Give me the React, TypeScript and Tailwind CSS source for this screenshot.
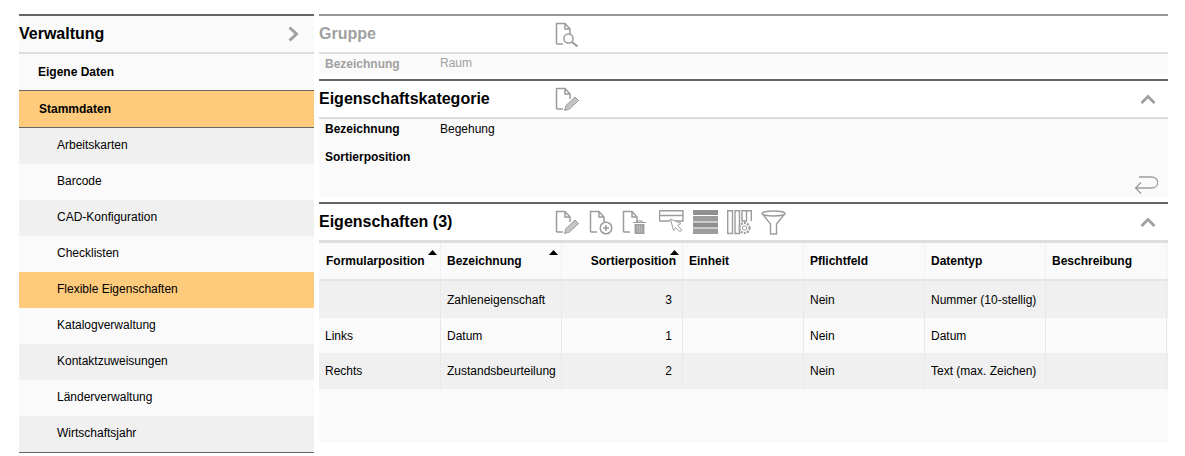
const menuItems = [
  { label: "Arbeitskarten", bg: "bg-[#f0f0f0]" },
  { label: "Barcode", bg: "bg-[#fafafa]" },
  { label: "CAD-Konfiguration", bg: "bg-[#f0f0f0]" },
  { label: "Checklisten", bg: "bg-[#fafafa]" },
  { label: "Flexible Eigenschaften", bg: "bg-[#fdcb7b]" },
  { label: "Katalogverwaltung", bg: "bg-[#fafafa]" },
  { label: "Kontaktzuweisungen", bg: "bg-[#f0f0f0]" },
  { label: "Länderverwaltung", bg: "bg-[#fafafa]" },
  { label: "Wirtschaftsjahr", bg: "bg-[#f0f0f0]" },
];

const columns = ["Formularposition", "Bezeichnung", "Sortierposition", "Einheit", "Pflichtfeld", "Datentyp", "Beschreibung"];

const rows = [
  { form: "", name: "Zahleneigenschaft", pos: "3", type: "Nummer (10-stellig)", bg: "bg-[#f0f0f0]", h: "h-[37px]" },
  { form: "Links", name: "Datum", pos: "1", type: "Datum", bg: "bg-[#fafafa]", h: "h-[35px]" },
  { form: "Rechts", name: "Zustandsbeurteilung", pos: "2", type: "Text (max. Zeichen)", bg: "bg-[#f0f0f0]", h: "h-[36px]" },
];

function Doc() {
  return <path d="M1.5 22V1.5H10L15 7V12M10 1.5V7H15M1.5 22H8" />;
}

function SearchDocIcon() {
  return (
    <svg width="24" height="25" viewBox="0 0 24 25" fill="none" stroke="#9c9c9c" strokeWidth="1.5" className="block">
      <Doc />
      <circle cx="13.5" cy="16.5" r="4.6" fill="#fff" />
      <path d="M17 20L22.5 24.5" strokeWidth="2.2" />
    </svg>
  );
}

function EditDocIcon() {
  return (
    <svg width="24" height="25" viewBox="0 0 24 25" fill="none" stroke="#9c9c9c" strokeWidth="1.5" className="block">
      <Doc />
      <path d="M9.5 23.5L11 18.5L20 10L23.5 13.5L14.5 22Z" fill="#c4c4c4" stroke="#9c9c9c" strokeWidth="1" />
    </svg>
  );
}

function AddDocIcon() {
  return (
    <svg width="24" height="25" viewBox="0 0 24 25" fill="none" stroke="#9c9c9c" strokeWidth="1.5" className="block">
      <Doc />
      <circle cx="17" cy="18" r="5.8" fill="#fff" />
      <path d="M14 18H20M17 15V21" />
    </svg>
  );
}

function TrashDocIcon() {
  return (
    <svg width="24" height="25" viewBox="0 0 24 25" fill="none" stroke="#9c9c9c" strokeWidth="1.5" className="block">
      <Doc />
      <path d="M11 12.5H24M15 12.5V11H20V12.5" strokeWidth="1.2" />
      <path d="M12.5 14H22.5V24H12.5Z" fill="#a0a0a0" stroke="none" />
      <path d="M15.5 15.5V22.5M17.5 15.5V22.5M19.5 15.5V22.5" stroke="#c8c8c8" strokeWidth="0.7" />
    </svg>
  );
}

function SelectRowIcon() {
  return (
    <svg width="25" height="22" viewBox="0 0 25 22" fill="none" stroke="#9c9c9c" strokeWidth="1.4" className="block">
      <path d="M0.5 0.7H24V5.5H0.5ZM0.5 5.5V11H11M16 11H24V5.5" />
      <path d="M11.5 9L22 13.5L18.5 15.5L23 20L21 21.5L16.5 17.5L14.5 20.5Z" fill="#fff" strokeWidth="1" />
    </svg>
  );
}

function RowsIcon() {
  return (
    <svg width="25" height="24" viewBox="0 0 25 24" className="block">
      <rect x="0" y="0" width="25" height="5" fill="#8f8f8f" />
      <rect x="0" y="6" width="25" height="5.5" fill="#9c9c9c" />
      <rect x="0" y="12.5" width="25" height="5" fill="#8f8f8f" />
      <rect x="0" y="18.5" width="25" height="5.5" fill="#9c9c9c" />
    </svg>
  );
}

function ColumnsIcon() {
  return (
    <svg width="25" height="25" viewBox="0 0 25 25" fill="none" stroke="#9c9c9c" strokeWidth="1.4" className="block">
      <path d="M0.7 0.7H5.5V23.5H0.7ZM8 0.7H12.5V23.5H8ZM15 0.7H19.5V11H15ZM19.5 0.7H24.3V11" />
      <circle cx="17.5" cy="18" r="5" fill="#fff" strokeWidth="2.2" strokeDasharray="2 1.2" />
      <circle cx="17.5" cy="18" r="2.2" strokeWidth="1" />
    </svg>
  );
}

function FilterIcon() {
  return (
    <svg width="25" height="25" viewBox="0 0 25 25" fill="none" stroke="#9c9c9c" strokeWidth="1.4" className="block">
      <ellipse cx="12.5" cy="3.5" rx="11.5" ry="2.5" />
      <path d="M1 3.5L9.5 14V24H15.5V14L24 3.5" />
    </svg>
  );
}

function ChevronUp() {
  return (
    <svg width="16" height="10" viewBox="0 0 16 10" fill="none" stroke="#a0a0a0" strokeWidth="2.8" className="block">
      <path d="M1.5 9L8 2.5L14.5 9" />
    </svg>
  );
}

function SortMark() {
  return (
    <svg width="9" height="5" viewBox="0 0 9 5" className="block">
      <path d="M4.5 0L9 5H0Z" fill="#000" />
    </svg>
  );
}

function PanelHeader({ title, muted, children, collapse }: { title: string; muted?: boolean; children?: React.ReactNode; collapse?: boolean }) {
  return (
    <div className="flex h-9 items-center bg-white">
      <div className={`w-[236px] text-base font-bold ${muted ? "text-[#a0a0a0]" : "text-black"}`}>{title}</div>
      <div className="flex flex-1 items-center">{children}</div>
      {collapse && (
        <div className="mr-[12px]">
          <ChevronUp />
        </div>
      )}
    </div>
  );
}

export default function App() {
  return (
    <div className="flex h-[456px] w-[1185px] bg-white pt-[14px] pl-[19px] font-['Liberation_Sans',Arial,sans-serif] text-xs text-black">
      {/* Sidebar */}
      <div className="w-[295px]">
        <div className="flex h-[40px] items-center justify-between border-t-2 border-b-2 border-t-[#666] border-b-[#ddd] bg-[#fafafa] pr-[15px]">
          <span className="text-base font-bold">Verwaltung</span>
          <svg width="11" height="16" viewBox="0 0 11 16" fill="none" stroke="#a0a0a0" strokeWidth="3" className="block">
            <path d="M1.5 1.5L8.5 8L1.5 14.5" />
          </svg>
        </div>
        <div className="flex h-9 items-center bg-[#fafafa] pl-[19px] font-bold">Eigene Daten</div>
        <div className="flex h-[38px] items-center border-y border-[#666] bg-[#fdcb7b] pl-5 font-bold">Stammdaten</div>
        {menuItems.map((item) => (
          <div key={item.label} className={`flex h-9 items-center pb-[2px] pl-[38px] ${item.bg}`}>
            {item.label}
          </div>
        ))}
        <div className="h-px bg-[#666]" />
      </div>

      {/* Content */}
      <div className="ml-[5px] w-[849px]">
        <div className="border-t-2 border-[#999]">
          <PanelHeader title="Gruppe" muted>
            <SearchDocIcon />
          </PanelHeader>
          <div className="flex h-[22px] border-t-2 border-[#ddd] bg-[#fafafa] pt-px text-[#a0a0a0]">
            <span className="w-[121px] pt-px pl-1.5 font-bold">Bezeichnung</span>
            <span>Raum</span>
          </div>
        </div>

        <div className="mt-[5px] border-t-2 border-[#666]">
          <PanelHeader title="Eigenschaftskategorie" collapse>
            <EditDocIcon />
          </PanelHeader>
          <div className="h-[80px] border-t-2 border-[#ddd] bg-[#fafafa]">
            <div className="flex h-5 items-center">
              <span className="w-[121px] pl-1.5 font-bold">Bezeichnung</span>
              <span>Begehung</span>
            </div>
            <div className="mt-2 flex h-5 items-center">
              <span className="w-[121px] pl-1.5 font-bold">Sortierposition</span>
            </div>
            <div className="mt-[9px] flex justify-end pr-[10px]">
              <svg width="24" height="18" viewBox="0 0 24 18" fill="none" stroke="#9c9c9c" strokeWidth="1.3" className="block">
                <path d="M5 1H17C26 1 26 12 17 12H1.5M7 6.5L1.5 12L7 17.5" />
              </svg>
            </div>
          </div>
        </div>

        <div className="mt-[5px] border-t-2 border-[#666]">
          <PanelHeader title="Eigenschaften (3)" collapse>
            <div className="flex items-center">
              <EditDocIcon />
              <div className="ml-[10px]">
                <AddDocIcon />
              </div>
              <div className="ml-[9px]">
                <TrashDocIcon />
              </div>
              <div className="mb-[3px] ml-[13px]">
                <SelectRowIcon />
              </div>
              <div className="ml-[9px]">
                <RowsIcon />
              </div>
              <div className="ml-[9px]">
                <ColumnsIcon />
              </div>
              <div className="ml-[9px]">
                <FilterIcon />
              </div>
            </div>
          </PanelHeader>
          <div className="h-[203px] border-t-[3px] border-[#ddd] bg-[#fafafa]">
            <div className="grid h-[38px] grid-cols-[122px_repeat(6,121px)] border-b-2 border-[#e4e4e4]">
              {columns.map((col, i) => (
                <div
                  key={col}
                  className={`relative flex items-center border-r border-[#f0f0f0] font-bold ${i === 0 ? "pl-[7px]" : "pl-1.5"} ${i === 2 ? "justify-end pr-[6px]" : ""}`}
                >
                  {col}
                  {i < 3 && (
                    <div className="absolute top-[7px] right-[3px]">
                      <SortMark />
                    </div>
                  )}
                </div>
              ))}
            </div>
            {rows.map((row) => (
              <div key={row.name} className={`grid grid-cols-[122px_repeat(6,121px)] ${row.h} ${row.bg}`}>
                <div className="flex items-center border-r border-[#e8e8e8] pl-1.5">{row.form}</div>
                <div className="flex items-center border-r border-[#e8e8e8] pl-1.5">{row.name}</div>
                <div className="flex items-center justify-end border-r border-[#e8e8e8] pr-[10px]">{row.pos}</div>
                <div className="border-r border-[#e8e8e8]" />
                <div className="flex items-center border-r border-[#e8e8e8] pl-1.5">Nein</div>
                <div className="flex items-center border-r border-[#e8e8e8] pl-1.5">{row.type}</div>
                <div className="border-r border-[#e8e8e8]" />
              </div>
            ))}
          </div>
        </div>
      </div>
    </div>
  );
}
